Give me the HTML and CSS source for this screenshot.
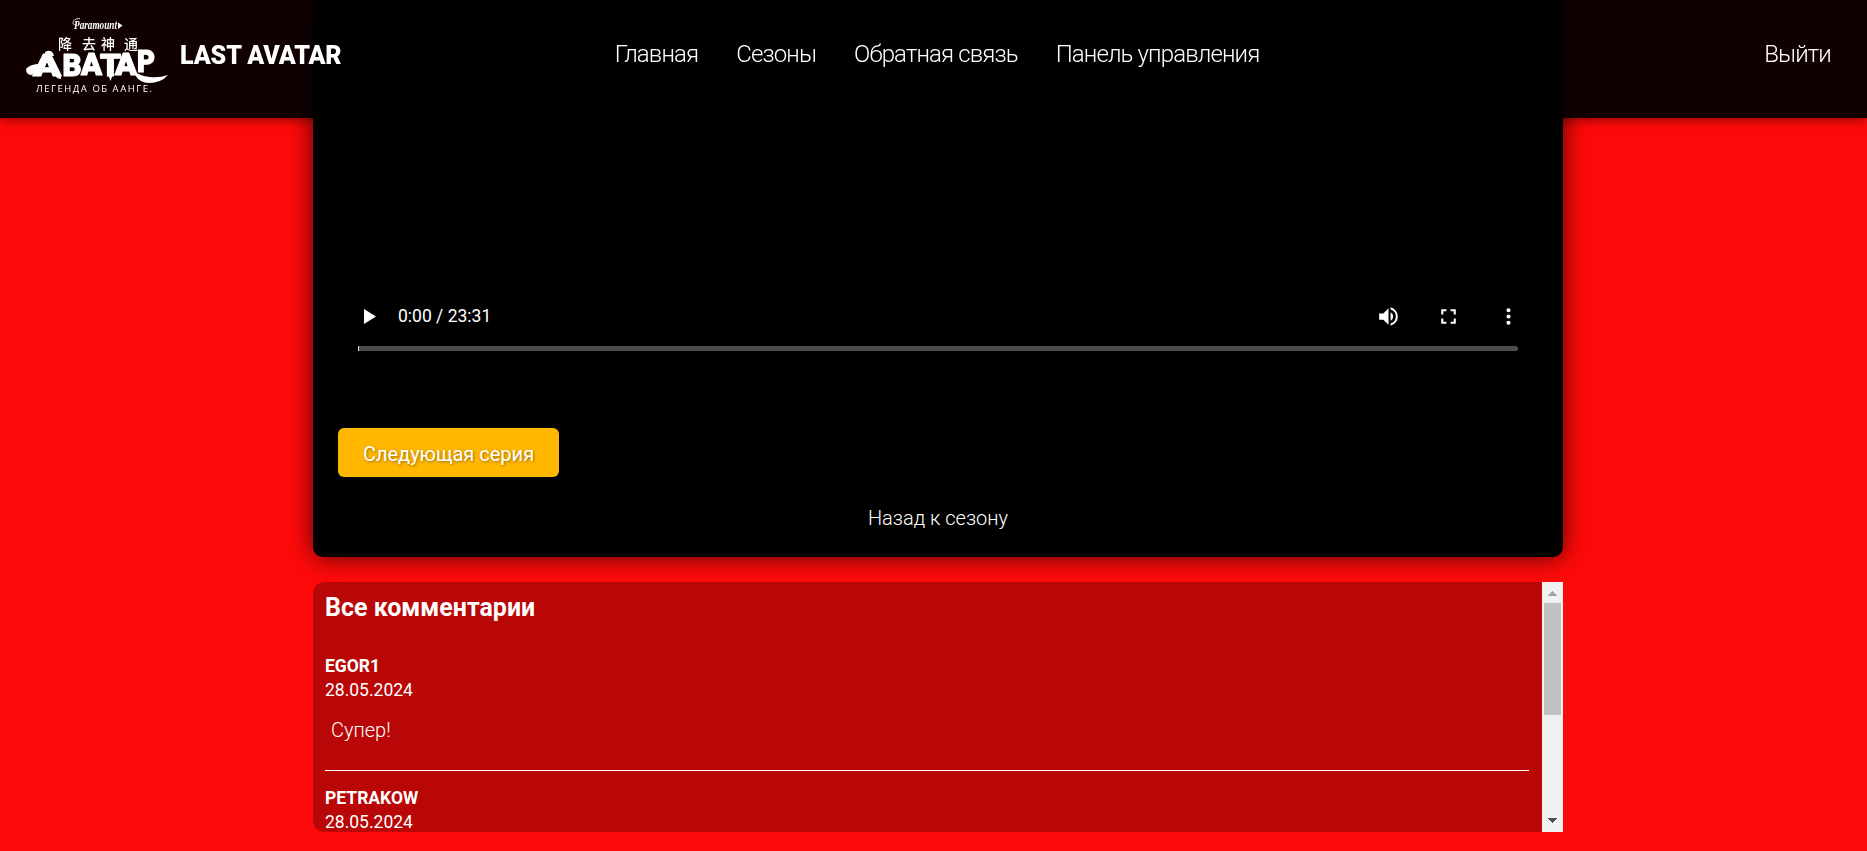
FILE: index.html
```html
<!DOCTYPE html>
<html lang="ru">
<head>
<meta charset="utf-8">
<title>Last Avatar</title>
<link rel="stylesheet" href="styles.css">
</head>
<body>
<header class="header">
  <a class="brand">
    <svg class="logo" viewBox="20 10 160 90" width="160" height="90">
      <g fill="#fff">
        <text class="logo-script" x="74" y="28.500" textLength="43" lengthAdjust="spacingAndGlyphs">Paramount</text>
        <path d="M118 22.500l4.500 3-4.500 3.500z"/>
        <path d="M80 18.500q-7 0-7 5 1 3 4 0" fill="none" stroke="#fff" stroke-width=".8"/>
        <text class="logo-cjk" y="49"><tspan x="58">降</tspan><tspan x="82">去</tspan><tspan x="101">神</tspan><tspan x="124">通</tspan></text>
        <g class="logo-main">
          <text x="33" y="76" textLength="28" lengthAdjust="spacingAndGlyphs">A</text>
          <text x="62.500" y="75.500" textLength="19" lengthAdjust="spacingAndGlyphs">B</text>
          <text x="81" y="74.500" textLength="21" lengthAdjust="spacingAndGlyphs">A</text>
          <text x="100" y="76" textLength="21" lengthAdjust="spacingAndGlyphs">T</text>
          <text x="115" y="75" textLength="22" lengthAdjust="spacingAndGlyphs">A</text>
          <text x="137" y="72" textLength="18" lengthAdjust="spacingAndGlyphs">P</text>
        </g>
        <path d="M26 69q4-5 14-5l3 6q-8 1-11 5-6 0-6-6zM45 52q5-3 8 1l1 3h-8zM56 75l5 0v4q-3 0-5-2zM108 74l2.500 7 2.500-7zM133 70q6 6 17 7 9 1 18-2-7 8-19 8-9 0-14-8z"/>
        <text class="logo-sub" x="36" y="92" textLength="116">ЛЕГЕНДА ОБ ААНГЕ.</text>
      </g>
    </svg>
    <span class="brand-name">LAST AVATAR</span>
  </a>
  <nav class="nav">
    <a>Главная</a>
    <a>Сезоны</a>
    <a>Обратная связь</a>
    <a>Панель управления</a>
  </nav>
  <a class="logout">Выйти</a>
</header>
<main class="page">
  <section class="player">
    <div class="controls">
      <svg class="play" viewBox="0 0 12 15" width="12" height="15"><path d="M0 0v15l12-7.500z" fill="#fff"/></svg>
      <span class="time">0:00 / 23:31</span>
      <svg class="icon" viewBox="0 0 24 24" width="25" height="25"><path fill="#fff" d="M3 9v6h4l5 5V4L7 9H3zm13.500 3A4.500 4.500 0 0 0 14 7.970v8.050A4.470 4.470 0 0 0 16.500 12zM14 3.230v2.060a7 7 0 0 1 0 13.420v2.060a9 9 0 0 0 0-17.540z"/></svg>
      <svg class="icon" viewBox="0 0 24 24" width="25" height="25"><path fill="#fff" d="M7 14H5v5h5v-2H7v-3zm-2-4h2V7h3V5H5v5zm12 7h-3v2h5v-5h-2v3zM14 5v2h3v3h2V5h-5z"/></svg>
      <svg class="icon" viewBox="0 0 24 24" width="25" height="25"><path fill="#fff" d="M12 8a2 2 0 1 0 0-4 2 2 0 0 0 0 4zm0 2a2 2 0 1 0 0 4 2 2 0 0 0 0-4zm0 6a2 2 0 1 0 0 4 2 2 0 0 0 0-4z"/></svg>
    </div>
    <div class="timeline"></div>
    <button class="next">Следующая серия</button>
    <a class="back">Назад к сезону</a>
  </section>
  <section class="comments">
    <div class="comments-body">
      <h2 class="comments-title">Все комментарии</h2>
      <article class="comment">
        <div class="author">EGOR1</div>
        <div class="date">28.05.2024</div>
        <p class="message">Супер!</p>
      </article>
      <article class="comment">
        <div class="author">PETRAKOW</div>
        <div class="date">28.05.2024</div>
      </article>
    </div>
    <div class="scrollbar">
      <svg class="arrow" viewBox="0 0 21 21" width="21" height="21" shape-rendering="crispEdges"><path d="M6 14h9l-4.500-5z" fill="#a3a3a3"/></svg>
      <div class="thumb"></div>
      <svg class="arrow" viewBox="0 0 21 21" width="21" height="21" shape-rendering="crispEdges"><path d="M6 7h9l-4.500 5z" fill="#505050"/></svg>
    </div>
  </section>
</main>
</body>
</html>
```

FILE: styles.css
```css
* { box-sizing: border-box; }
body {
  margin: 0;
  height: 851px;
  overflow: hidden;
  background: #ff0a0a;
  color: #fff;
  font-family: Roboto, sans-serif;
}
.header {
  position: fixed;
  top: 0;
  left: 0;
  z-index: 2;
  width: 100%;
  height: 118px;
  padding: 10px 36px 0 20px;
  display: grid;
  grid-template-columns: 1fr auto 1fr;
  align-items: start;
  background: rgba(0, 0, 0, .935);
  box-shadow: 0 0 12px rgba(0, 0, 0, .6);
}
.brand { display: flex; align-items: flex-start; }
.logo { display: block; }
.brand-name {
  padding-top: 31px;
  font-size: 25px;
  line-height: 30px;
  font-weight: 900;
  letter-spacing: -.1px;
  white-space: nowrap;
}
.logo-script { font: italic bold 13px "Liberation Serif", serif; }
.logo-cjk { font: 500 14px "Noto Sans CJK SC", sans-serif; }
.logo-main {
  font: 900 31px Roboto, sans-serif;
  stroke: #fff;
  stroke-width: 1.2;
  stroke-linejoin: round;
}
.logo-sub { font: 9.500px "Open Sans", sans-serif; }
.nav {
  display: flex;
  gap: 38px;
  padding: 30px 0 0 23px;
}
.nav a, .logout {
  font-size: 24px;
  line-height: 28px;
  font-weight: 300;
  letter-spacing: -.87px;
  white-space: nowrap;
}
.logout { padding-top: 30px; justify-self: end; }
.page {
  width: 1250px;
  margin: 0 auto;
  position: relative;
  left: 4.500px;
}
.player {
  height: 557px;
  padding: 304px 25px 0;
  display: flex;
  flex-direction: column;
  background: #000;
  border-radius: 0 0 10px 10px;
  box-shadow: 0 0 25px rgba(0, 0, 0, .7);
}
.controls {
  height: 25px;
  padding: 0 17px 0 26px;
  display: flex;
  align-items: center;
}
.time {
  margin: -2px auto 0 22px;
  font-size: 17.500px;
}
.icon + .icon { margin-left: 35px; }
.timeline {
  height: 5px;
  margin: 17px 20px 77px;
  background: #4d4d4d;
  border-left: 1px solid #ddd;
  border-radius: 0 3px 3px 0;
}
.next {
  width: 221px;
  height: 49px;
  padding: 2px 0 0;
  border: 0;
  border-radius: 6px;
  background: #ffb700;
  color: #fff;
  font: 400 20px Roboto, sans-serif;
  text-shadow: 1px 1px 3px rgba(0, 0, 0, .4);
}
.back {
  margin-top: 29px;
  align-self: center;
  font-size: 20px;
  line-height: 24px;
  font-weight: 300;
}
.comments {
  height: 250px;
  margin-top: 25px;
  display: flex;
  overflow: hidden;
  background: #b90606;
  border-radius: 12px 0 0 12px;
}
.comments-body { flex: 1; padding: 11px 13px 0 12px; }
.comments-title {
  margin: 0 0 31px;
  font-size: 25px;
  line-height: 30px;
  font-weight: 700;
}
.comment {
  height: 117px;
  margin-bottom: 15px;
  border-bottom: 1px solid #fff;
}
.author, .date { font-size: 17.500px; line-height: 24px; }
.author { font-weight: 700; }
.message {
  margin: 16px 0 0 6px;
  font-size: 20px;
  line-height: 24px;
  font-weight: 300;
}
.scrollbar {
  width: 21px;
  display: flex;
  flex-direction: column;
  background: #f1f1f1;
}
.arrow { display: block; }
.thumb {
  height: 112px;
  margin: 0 2px auto;
  background: #c1c1c1;
}
```
